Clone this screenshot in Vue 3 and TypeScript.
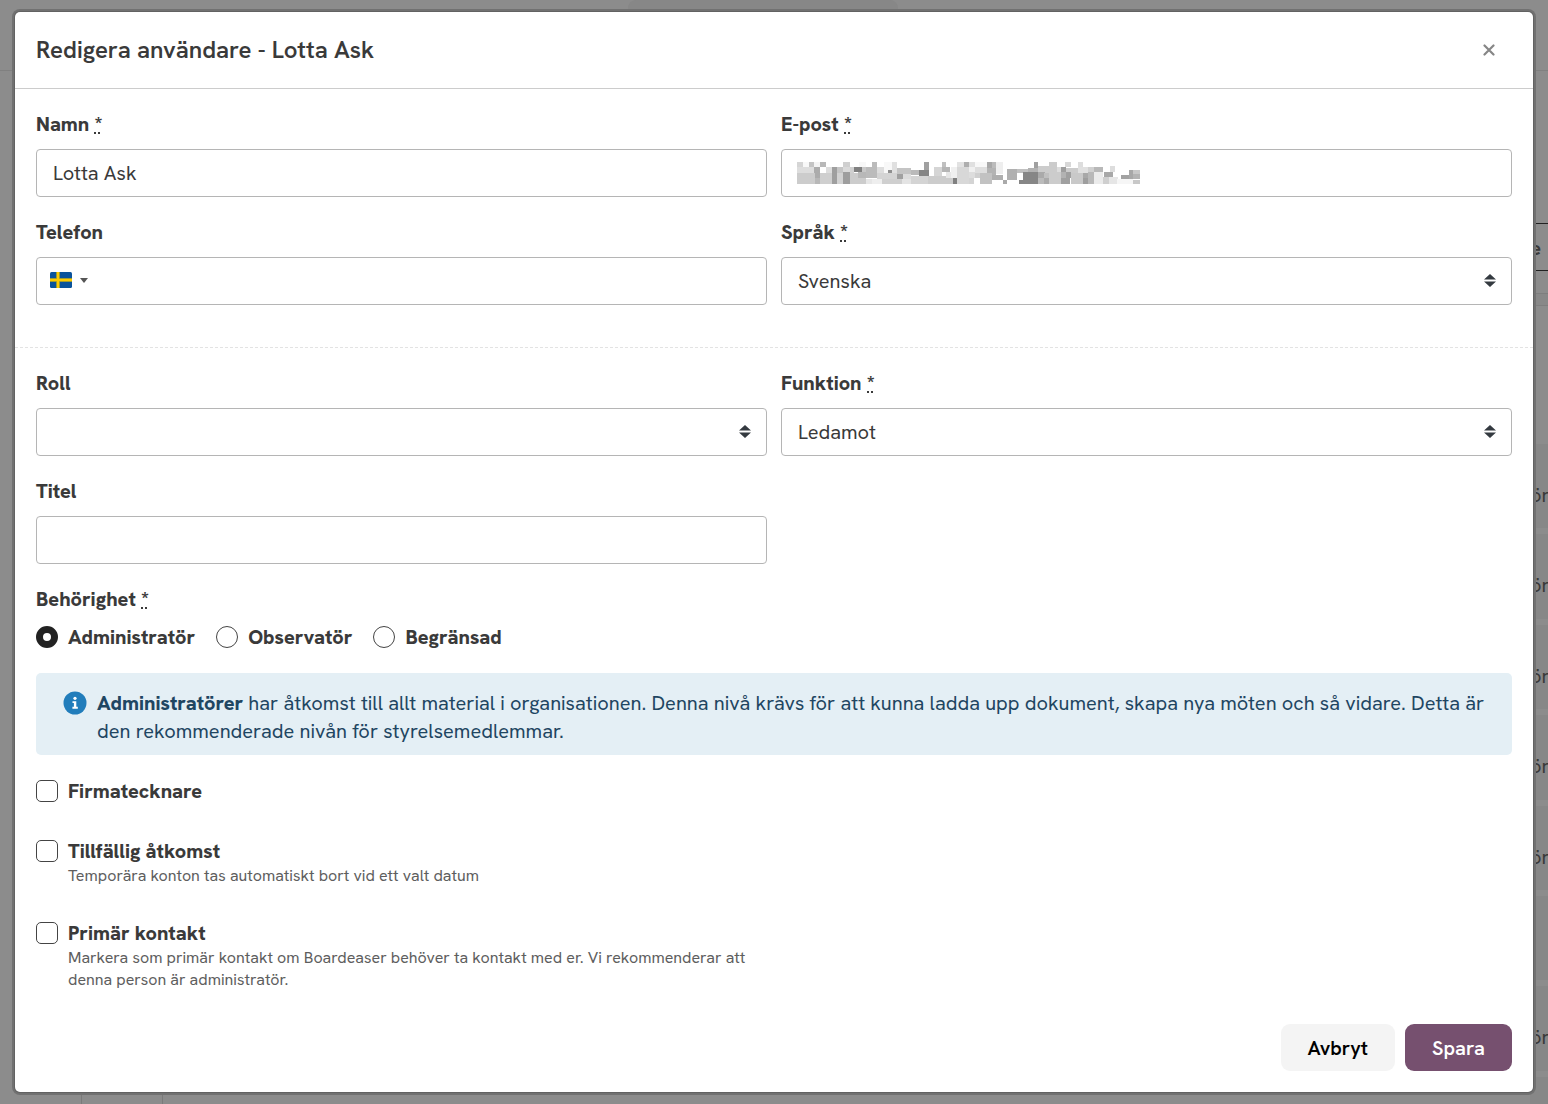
<script setup lang="ts">
import { ref } from 'vue'

type Block = [x: number, y: number, w: number, h: number, shade: string]

const name = ref('Lotta Ask')
const phone = ref('')
const language = ref('Svenska')
const role = ref('')
const position = ref('Ledamot')
const title = ref('')
const access = ref('Administratör')
const accessLevels = ['Administratör', 'Observatör', 'Begränsad']

const options = [
  { id: 'signatory', label: 'Firmatecknare', help: '' },
  { id: 'temporary', label: 'Tillfällig åtkomst', help: 'Temporära konton tas automatiskt bort vid ett valt datum' },
  {
    id: 'primary',
    label: 'Primär kontakt',
    help: 'Markera som primär kontakt om Boardeaser behöver ta kontakt med er. Vi rekommenderar att denna person är administratör.',
  },
]
const checked = ref<string[]>([])

// Rows of the member list behind the dialog
const members = ['ör', 'ör', 'ör', 'ör', 'ör', '', 'ör', '']

// Pixelated cover for the concealed e-mail address
const mosaic: Block[] = [
  [0, 0, 6, 5, '#d5d5d5'], [6, 0, 6, 5, '#f8f8f8'], [12, 0, 5, 5, '#c4c4c4'], [17, 0, 6, 5, '#f4f4f4'], [23, 0, 6, 5, '#b8b8b8'],
  [46, 0, 7, 5, '#d0d0d0'], [62, 0, 7, 5, '#f8f8f8'], [75, 0, 5, 5, '#bbbbbb'], [87, 0, 8, 11, '#f8f8f8'], [95, 0, 5, 11, '#e0e0e0'],
  [127, 0, 5, 8, '#a0a0a0'], [145, 0, 4, 5, '#c0c0c0'], [160, 0, 7, 5, '#e2e2e2'], [167, 0, 5, 5, '#aeaeae'], [172, 0, 6, 5, '#e0e0e0'],
  [178, 0, 12, 5, '#f8f8f8'], [190, 0, 5, 6, '#a8a8a8'], [195, 0, 4, 6, '#bbbbbb'], [199, 0, 7, 12, '#eeeeee'], [237, 0, 4, 6, '#a0a0a0'],
  [252, 0, 8, 22, '#cccccc'], [268, 0, 6, 5, '#d8d8d8'], [281, 0, 5, 5, '#dddddd'],
  [0, 5, 17, 6, '#dddddd'], [17, 5, 6, 11, '#acacac'], [29, 5, 6, 6, '#dddddd'], [35, 5, 5, 17, '#9f9f9f'], [40, 5, 6, 6, '#c5c5c5'],
  [46, 5, 7, 5, '#dadada'], [53, 5, 4, 6, '#d0d0d0'], [57, 5, 8, 5, '#808080'], [65, 5, 4, 5, '#c8c8c8'], [69, 5, 11, 11, '#bbbbbb'],
  [80, 5, 7, 6, '#dddddd'], [91, 8, 4, 4, '#8f8f8f'], [100, 6, 14, 6, '#c4c4c4'], [114, 8, 8, 5, '#bababa'], [122, 8, 10, 6, '#858585'],
  [137, 5, 8, 9, '#d5d5d5'], [145, 5, 8, 5, '#b5b5b5'], [149, 10, 5, 6, '#e6e6e6'], [154, 5, 6, 11, '#f0f0f0'], [160, 5, 12, 17, '#d8d8d8'],
  [172, 5, 6, 5, '#f0f0f0'], [178, 5, 12, 6, '#dedede'], [190, 6, 9, 12, '#b3b3b3'], [210, 7, 10, 11, '#b0b0b0'], [220, 7, 11, 4, '#c0c0c0'],
  [231, 6, 10, 4, '#b2b2b2'], [241, 4, 11, 7, '#cccccc'], [264, 5, 5, 6, '#9e9e9e'], [260, 5, 4, 6, '#dddddd'], [269, 6, 12, 5, '#cccccc'],
  [281, 5, 10, 6, '#e0e0e0'], [291, 5, 6, 5, '#d0d0d0'], [297, 5, 9, 5, '#b8b8b8'], [313, 4, 5, 6, '#dddddd'],
  [0, 11, 18, 11, '#cccccc'], [18, 16, 5, 6, '#b8b8b8'], [23, 11, 12, 11, '#cfcfcf'], [40, 11, 6, 11, '#d2d2d2'], [46, 10, 7, 12, '#9e9e9e'],
  [53, 11, 8, 11, '#cccccc'], [61, 10, 8, 6, '#b8b8b8'], [61, 16, 8, 6, '#cccccc'], [69, 17, 6, 5, '#e6e6e6'], [75, 17, 10, 5, '#eeeeee'],
  [80, 11, 20, 6, '#d4d4d4'], [100, 12, 6, 5, '#a0a0a0'], [106, 12, 8, 5, '#dcdcdc'], [85, 17, 20, 5, '#cfcfcf'], [105, 17, 9, 5, '#e4e4e4'],
  [114, 14, 17, 8, '#d4d4d4'], [131, 14, 18, 8, '#cccccc'], [149, 16, 7, 6, '#cccccc'], [156, 16, 4, 6, '#808080'], [172, 10, 6, 6, '#dddddd'],
  [172, 16, 5, 6, '#d4d4d4'], [178, 11, 5, 5, '#d0d0d0'], [183, 11, 12, 11, '#c2c2c2'], [195, 13, 11, 5, '#aeaeae'], [206, 18, 4, 4, '#aaaaaa'],
  [226, 10, 15, 12, '#868686'], [222, 18, 4, 4, '#868686'], [241, 10, 7, 6, '#aaaaaa'], [241, 16, 6, 6, '#bbbbbb'], [247, 11, 5, 5, '#c0c0c0'],
  [247, 16, 5, 6, '#aaaaaa'], [260, 10, 4, 12, '#cccccc'], [264, 10, 5, 6, '#b2b2b2'], [264, 16, 9, 6, '#a0a0a0'], [269, 10, 5, 6, '#9f9f9f'],
  [274, 11, 12, 11, '#c9c9c9'], [286, 11, 5, 5, '#a8a8a8'], [286, 16, 5, 6, '#9e9e9e'], [291, 10, 6, 12, '#b8b8b8'], [297, 10, 9, 12, '#ebebeb'],
  [307, 10, 9, 5, '#a8a8a8'], [306, 15, 6, 7, '#cfcfcf'], [312, 15, 9, 7, '#e6e6e6'], [324, 13, 8, 4, '#a2a2a2'], [332, 8, 4, 9, '#a8a8a8'],
  [336, 8, 7, 4, '#c8c8c8'], [336, 12, 7, 5, '#b4b4b4'], [320, 17, 16, 5, '#f6f6f6'], [336, 18, 7, 4, '#c8c8c8'],
]
</script>

<template>
  <div class="page">
    <div class="backdrop" aria-hidden="true">
      <div class="tab-shape"></div>
      <div class="topline"></div>
      <div class="search"><span>e</span></div>
      <div class="rule"></div>
      <div class="member-list">
        <div v-for="(m, i) in members" :key="i" class="member">{{ m }}</div>
      </div>
      <div class="foot-cells"></div>
    </div>

    <section class="dialog" role="dialog" aria-modal="true" aria-labelledby="dialog-title">
      <header class="dialog-head">
        <h1 id="dialog-title">Redigera användare - Lotta Ask</h1>
        <button type="button" class="close" aria-label="Stäng">
          <svg width="12" height="12" viewBox="0 0 12 12"><path d="M1.5 1.5l9 9M10.5 1.5l-9 9" stroke="#868686" stroke-width="2.2" stroke-linecap="round" /></svg>
        </button>
      </header>

      <form @submit.prevent>
        <div class="grid first">
          <div class="field">
            <label for="name">Namn <abbr title="obligatorisk">*</abbr></label>
            <input id="name" v-model="name" class="control" type="text" />
          </div>
          <div class="field">
            <label for="email">E-post <abbr title="obligatorisk">*</abbr></label>
            <div class="wrap">
              <input id="email" class="control" type="email" />
              <svg class="mosaic" width="343" height="22" viewBox="0 0 343 22" shape-rendering="crispEdges" aria-hidden="true">
                <rect v-for="(b, i) in mosaic" :key="i" :x="b[0]" :y="b[1]" :width="b[2]" :height="b[3]" :fill="b[4]" />
              </svg>
            </div>
          </div>
          <div class="field">
            <label for="phone">Telefon</label>
            <div class="wrap">
              <input id="phone" v-model="phone" class="control phone" type="tel" />
              <button type="button" class="country" aria-label="Landskod Sverige">
                <svg width="22" height="16" viewBox="0 0 22 16">
                  <clipPath id="flag"><rect width="22" height="16" rx="1.5" /></clipPath>
                  <g clip-path="url(#flag)">
                    <rect width="22" height="16" fill="#0a539b" />
                    <path d="M0 8h22M8 0v16" stroke="#7c8d45" stroke-width="4" />
                    <path d="M0 8h22M8 0v16" stroke="#fecb00" stroke-width="2.4" />
                  </g>
                </svg>
                <svg width="8" height="5" viewBox="0 0 8 5"><path d="M0 0h8L4 5z" fill="#555" /></svg>
              </button>
            </div>
          </div>
          <div class="field">
            <label for="language">Språk <abbr title="obligatorisk">*</abbr></label>
            <div class="wrap">
              <select id="language" v-model="language" class="control"><option>Svenska</option></select>
              <svg class="arrows" width="12" height="13" viewBox="0 0 12 13"><path d="M0 5.5L6 0l6 5.5zM0 7.5h12L6 13z" fill="#343a40" /></svg>
            </div>
          </div>
        </div>

        <div class="second">
          <div class="grid">
            <div class="field">
              <label for="role">Roll</label>
              <div class="wrap">
                <select id="role" v-model="role" class="control"><option value=""></option></select>
                <svg class="arrows" width="12" height="13" viewBox="0 0 12 13"><path d="M0 5.5L6 0l6 5.5zM0 7.5h12L6 13z" fill="#343a40" /></svg>
              </div>
            </div>
            <div class="field">
              <label for="position">Funktion <abbr title="obligatorisk">*</abbr></label>
              <div class="wrap">
                <select id="position" v-model="position" class="control"><option>Ledamot</option></select>
                <svg class="arrows" width="12" height="13" viewBox="0 0 12 13"><path d="M0 5.5L6 0l6 5.5zM0 7.5h12L6 13z" fill="#343a40" /></svg>
              </div>
            </div>
            <div class="field">
              <label for="title">Titel</label>
              <input id="title" v-model="title" class="control" type="text" />
            </div>
          </div>

          <fieldset>
            <legend>Behörighet <abbr title="obligatorisk">*</abbr></legend>
            <div class="radios">
              <label v-for="level in accessLevels" :key="level">
                <input v-model="access" type="radio" name="access" :value="level" />{{ level }}
              </label>
            </div>
          </fieldset>

          <div class="alert">
            <svg width="24" height="24" viewBox="0 0 24 24" aria-hidden="true">
              <circle cx="12" cy="12" r="11.5" fill="#217dbb" />
              <circle cx="12" cy="7.3" r="1.6" fill="#fff" />
              <path d="M9.5 10.2h3.8v5.6h1.5v1.9H9.4v-1.9h1.5v-3.7H9.5z" fill="#fff" />
            </svg>
            <p><strong>Administratörer</strong> har åtkomst till allt material i organisationen. Denna nivå krävs för att kunna ladda upp dokument, skapa nya möten och så vidare. Detta är den rekommenderade nivån för styrelsemedlemmar.</p>
          </div>

          <div class="checks">
            <div v-for="o in options" :key="o.id" class="check">
              <input :id="o.id" v-model="checked" type="checkbox" :value="o.id" />
              <div>
                <label :for="o.id">{{ o.label }}</label>
                <p v-if="o.help">{{ o.help }}</p>
              </div>
            </div>
          </div>

          <div class="actions">
            <button type="button" class="btn">Avbryt</button>
            <button type="submit" class="btn primary">Spara</button>
          </div>
        </div>
      </form>
    </section>
  </div>
</template>

<style>
body {
  background: #8c8c8c;
}
</style>

<style scoped>
* {
  box-sizing: border-box;
}
.page {
  position: relative;
  min-height: 100vh;
  padding: 12px 15px;
  overflow: hidden;
  font: 400 20px/28px "Hanken Grotesk", Figtree, "Noto Sans", sans-serif;
  color: #3a3a3a;
}
.backdrop {
  position: absolute;
  inset: 0;
  background: #8c8c8c;
  overflow: hidden;
}
.tab-shape {
  position: absolute;
  left: 628px;
  top: 0;
  width: 270px;
  height: 12px;
  background: #878787;
  border-radius: 8px 8px 0 0;
}
.topline {
  position: absolute;
  top: 70px;
  left: 0;
  right: 0;
  height: 1px;
  background: #808080;
}
.search {
  position: absolute;
  top: 223px;
  right: 0;
  width: 60px;
  height: 48px;
  padding: 10px 7px;
  border: solid #222;
  border-width: 1px 0;
  font-weight: 700;
  text-align: right;
}
.rule {
  position: absolute;
  top: 293px;
  right: 0;
  width: 60px;
  height: 13px;
  background: #888;
  border: solid #7e7e7e;
  border-width: 1px 0;
}
.member-list {
  position: absolute;
  top: 444px;
  right: 0;
  display: grid;
  grid-auto-rows: 1fr;
  gap: 6px;
  width: 18px;
  height: 717px;
}
.member {
  display: flex;
  justify-content: flex-end;
  padding-top: 37px;
  background: #878787;
}
.foot-cells {
  position: absolute;
  left: 81px;
  bottom: 0;
  width: 82px;
  height: 12px;
  border: solid #7b7b7b;
  border-width: 0 1px;
}
.dialog {
  position: relative;
  background: #fff;
  border-radius: 5px;
  box-shadow: 0 0 0 1px #626262, 0 0 0 3px #717171;
}
.dialog-head {
  display: flex;
  align-items: center;
  justify-content: space-between;
  height: 77px;
  padding: 0 38px 0 21px;
  border-bottom: 1px solid #ccc;
}
h1 {
  margin: 0;
  font-size: 24px;
  font-weight: 600;
}
.close {
  display: flex;
  padding: 0;
  border: 0;
  background: none;
}
.grid {
  display: grid;
  grid-template-columns: 1fr 1fr;
  gap: 21px 14px;
}
.first {
  padding: 21px 21px 42px;
  border-bottom: 1px dashed #e3e3e3;
}
.second {
  padding: 21px;
}
.field > label,
legend {
  display: block;
  margin-bottom: 11px;
  padding: 0;
  font-weight: 800;
}
abbr {
  text-decoration: none;
  background: linear-gradient(90deg, #3a3a3a 2px, transparent 2px) 0 21px / 4px 2px repeat-x;
}
.wrap {
  position: relative;
}
.control {
  display: block;
  width: 100%;
  height: 48px;
  padding: 0 16px;
  border: 1px solid #b5b5b5;
  border-radius: 4px;
  background: #fff;
  font: inherit;
  color: inherit;
  appearance: none;
}
.phone {
  padding-left: 64px;
}
.mosaic {
  position: absolute;
  left: 16px;
  top: 13px;
}
.country {
  position: absolute;
  left: 14px;
  top: 15px;
  display: flex;
  align-items: center;
  gap: 8px;
  padding: 0;
  border: 0;
  background: none;
}
.arrows {
  position: absolute;
  right: 16px;
  top: 17px;
  pointer-events: none;
}
fieldset {
  margin: 21px 0 0;
  padding: 0;
  border: 0;
}
legend {
  margin-bottom: 10px;
}
.radios {
  display: flex;
  gap: 21px;
}
.radios label {
  display: flex;
  align-items: center;
  gap: 10px;
  font-weight: 800;
}
input[type="radio"],
input[type="checkbox"] {
  flex: none;
  width: 22px;
  height: 22px;
  margin: 0;
  border: 1px solid #444;
  border-radius: 5px;
  background: #fff;
  appearance: none;
}
input[type="radio"] {
  border-radius: 50%;
}
input[type="radio"]:checked {
  border: 7px solid #222;
}
input[type="checkbox"]:checked {
  background: #222;
}
.alert {
  display: flex;
  gap: 10px;
  margin-top: 22px;
  padding: 16px 27px 10px;
  border-radius: 5px;
  background: #e4eff5;
  color: #1f4662;
}
.alert svg {
  flex: none;
  margin-top: 2px;
}
.alert p {
  margin: 0;
}
.alert strong {
  font-weight: 800;
}
.checks {
  display: grid;
  gap: 32px;
  width: 50%;
  margin-top: 22px;
}
.check {
  display: flex;
  gap: 10px;
}
.check input {
  margin-top: 3px;
}
.check label {
  display: block;
  font-weight: 800;
}
.check p {
  margin: 0;
  font-size: 16px;
  line-height: 22px;
  color: #5e5e5e;
}
.actions {
  display: flex;
  justify-content: flex-end;
  gap: 10px;
  margin-top: 33px;
}
.btn {
  height: 47px;
  padding: 0 27px;
  border: 0;
  border-radius: 9px;
  background: #f4f4f4;
  font: inherit;
  font-weight: 600;
  color: #000;
}
.primary {
  background: #76506f;
  color: #fff;
}
</style>
